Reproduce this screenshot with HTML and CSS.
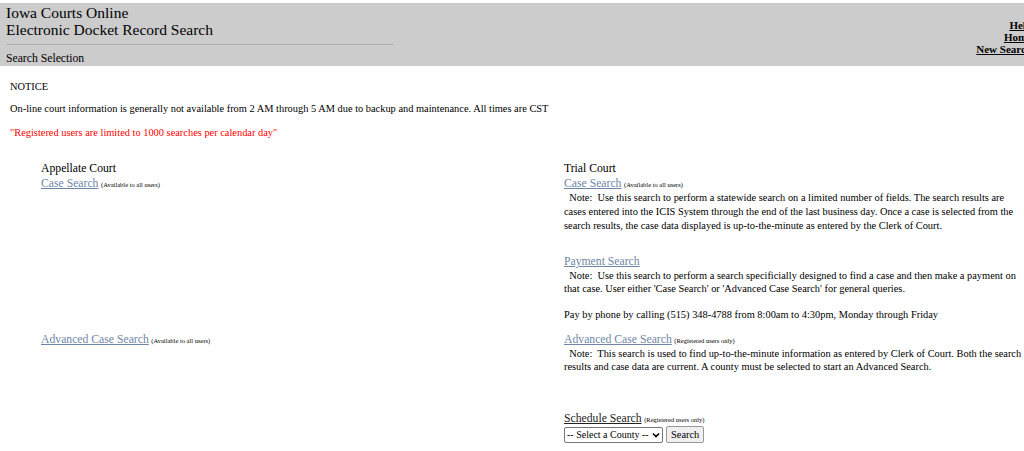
FILE: index.html
```html
<!DOCTYPE html>
<html lang="en">
<head>
    <meta charset="UTF-8">
    <title>Iowa Courts Online - Search Selection</title>
    <link rel="stylesheet" href="styles.css">
</head>
<body>
    <div class="header">
        <div class="header-left">
            <div class="site-title">Iowa Courts Online<br>Electronic Docket Record Search</div>
            <hr class="header-rule">
            <div class="page-name">Search Selection</div>
        </div>
        <div class="header-links">
            <a href="#">Help</a><br>
            <a href="#">Home</a><br>
            <a href="#">New Search</a>
        </div>
    </div>

    <div class="notice">
        <p class="notice-head">NOTICE</p>
        <p>On-line court information is generally not available from 2 AM through 5 AM due to backup and maintenance. All times are CST</p>
        <p class="warning">"Registered users are limited to 1000 searches per calendar day"</p>
    </div>

    <div class="courts">
        <div class="court-title">Appellate Court</div>
        <div class="court-title">Trial Court</div>

        <!-- row 1 -->
        <div class="cell">
            <a class="search-link" href="#">Case Search</a> <span class="small">(Available to all users)</span>
        </div>
        <div class="cell">
            <a class="search-link" href="#">Case Search</a> <span class="small">(Available to all users)</span>
            <div class="note first">&nbsp;&nbsp;Note:&nbsp; Use this search to perform a statewide search on a limited number of fields. The search results are cases entered into the ICIS System through the end of the last business day. Once a case is selected from the search results, the case data displayed is up-to-the-minute as entered by the Clerk of Court.</div>

            <div class="block">
                <a class="search-link" href="#">Payment Search</a>
                <div class="note">&nbsp;&nbsp;Note:&nbsp; Use this search to perform a search specificially designed to find a case and then make a payment on that case. User either 'Case Search' or 'Advanced Case Search' for general queries.</div>
                <div class="note phone">Pay by phone by calling (515) 348-4788 from 8:00am to 4:30pm, Monday through Friday</div>
            </div>
        </div>

        <!-- row 2 -->
        <div class="cell row-gap">
            <a class="search-link" href="#">Advanced Case Search</a> <span class="small">(Available to all users)</span>
        </div>
        <div class="cell row-gap">
            <a class="search-link" href="#">Advanced Case Search</a> <span class="small">(Registered users only)</span>
            <div class="note">&nbsp;&nbsp;Note:&nbsp; This search is used to find up-to-the-minute information as entered by Clerk of Court. Both the search results and case data are current. A county must be selected to start an Advanced Search.</div>
        </div>

        <!-- row 3 -->
        <div class="cell"></div>
        <div class="cell schedule">
            <a class="search-link dark" href="#">Schedule Search</a> <span class="small">(Registered users only)</span>
            <form class="county-form">
                <span class="select-wrap">
                    <select class="county-select">
                        <option>-- Select a County --</option>
                    </select>
                    <svg class="select-arrow" width="8" height="6" viewBox="0 0 8 6">
                        <path d="M1 1.5 L4 4.5 L7 1.5" fill="none" stroke="#000" stroke-width="1.6"/>
                    </svg>
                </span>
                <button type="button" class="county-btn">Search</button>
            </form>
        </div>
    </div>
</body>
</html>
```

FILE: styles.css
```css
/* Base */
body {
    margin: 0;
    padding: 0;
    font-family: "Liberation Serif", "Times New Roman", serif;
    color: #000;
    background: #fff;
    overflow-x: hidden;
}

/* Header band */
.header {
    margin-top: 3px;
    background-color: #cccccc;
    display: flex;
    justify-content: space-between;
    align-items: center;
    height: 63px;
    padding-left: 6px;
    margin-right: -8px;
}

.header-left {
    width: 388px;
}

.site-title {
    font-size: 15.5px;
    line-height: 17px;
}

.header-rule {
    border: none;
    border-top: 1px solid #b0b0b0;
    margin: 6px 0 7px 0;
}

.page-name {
    font-size: 11.7px;
    line-height: 14px;
}

.header-links {
    text-align: right;
    font-size: 11px;
    line-height: 12px;
    font-weight: bold;
    padding-top: 4px;
}

.header-links a {
    color: #000;
}

/* Notice */
.notice {
    padding: 14px 10px 0 10px;
    font-size: 10.4px;
}

.notice p {
    margin: 0 0 11px 0;
    line-height: 13px;
}

.notice .notice-head {
    margin-bottom: 9px;
}

.notice .warning {
    color: #ff0000;
}

/* Courts table */
.courts {
    display: grid;
    grid-template-columns: 523px 458px;
    padding-left: 41px;
    margin-top: 22px;
    font-size: 10.4px;
}

.court-title {
    font-size: 11.7px;
    line-height: 16px;
}

.search-link {
    font-size: 11.7px;
    line-height: 14px;
    color: #6f86a6;
}

.search-link.dark {
    color: #222;
}

.small {
    font-size: 6.5px;
}

.note {
    line-height: 13px;
}

.note.first {
    line-height: 14px;
}

.block {
    margin-top: 22px;
}

.note.phone {
    margin-top: 13px;
}

.row-gap {
    padding-top: 12px;
}

.schedule {
    padding-top: 39px;
    line-height: 12px;
}

/* County picker */
.county-form {
    margin: 0;
    display: flex;
    gap: 3px;
    align-items: center;
}

.select-wrap {
    position: relative;
    display: inline-block;
    height: 16px;
}

.county-select {
    appearance: none;
    -webkit-appearance: none;
    font-family: "Liberation Serif", "Times New Roman", serif;
    font-size: 10px;
    color: #000;
    width: 99px;
    height: 16px;
    padding: 0 11px 0 2px;
    border: 1px solid #767676;
    border-radius: 2px;
    background: #fff;
}

.select-arrow {
    position: absolute;
    right: 3px;
    top: 5px;
    pointer-events: none;
}

.county-btn {
    font-family: "Liberation Serif", "Times New Roman", serif;
    font-size: 10.4px;
    color: #000;
    height: 17px;
    padding: 0 4px;
    border: 1px solid #999;
    border-radius: 2px;
    background: #efefef;
}
```
